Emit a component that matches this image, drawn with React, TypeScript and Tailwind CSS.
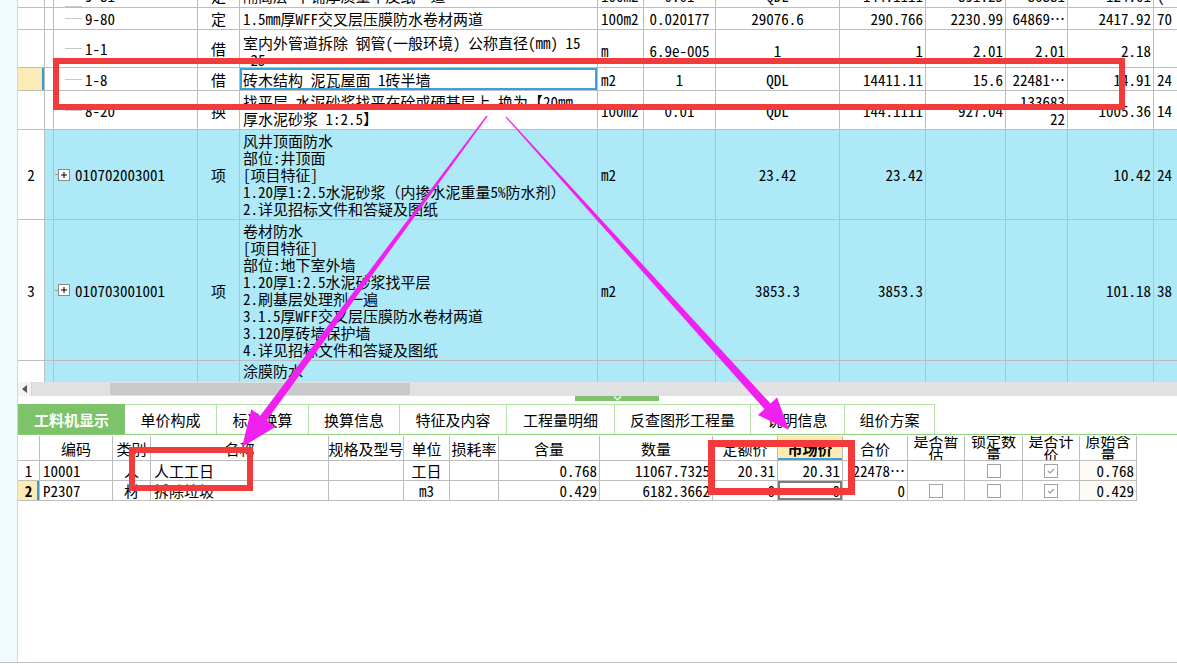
import React from "react";

type Align = "l" | "c" | "r" | "n";
type VAlign = "c" | "t" | "b";

const TOP_COLS =
  "grid grid-cols-[27px_9px_144px_42px_358px_46px_72px_124px_86px_80px_62px_86px_60px]";
const BOT_COLS =
  "grid grid-cols-[22px_73px_38px_178px_75px_46px_49px_101px_113px_65px_65px_65px_57px_58px_57px_57px]";

const H: Record<Align, string> = {
  l: "justify-start pl-[3px]",
  c: "justify-center",
  r: "justify-end pr-[2px]",
  n: "justify-start",
};
const V: Record<VAlign, string> = { c: "items-center", t: "items-start", b: "items-end" };

const BLUE = "bg-[#aee9f8]";

function Cell({
  a = "l",
  v = "c",
  className = "",
  children,
}: {
  a?: Align;
  v?: VAlign;
  className?: string;
  children?: React.ReactNode;
}) {
  return (
    <div
      className={`flex min-w-0 overflow-hidden whitespace-nowrap border-r border-b border-[#bdbdbd] ${H[a]} ${V[v]} ${className}`}
    >
      {children}
    </div>
  );
}

const Lines = ({ l, r = false }: { l: string[]; r?: boolean }) => (
  <div className={`flex flex-col ${r ? "items-end" : "items-start"}`}>
    {l.map((t, i) => (
      <div key={i}>{t}</div>
    ))}
  </div>
);

// tree connector for child rows
const Conn = () => <span className="ml-[11px] mr-[3px] w-[17px] h-px shrink-0 bg-[#c8c8c8]" />;

const Expand = () => (
  <>
    <span className="ml-[1px] w-[3px] h-px shrink-0 bg-[#9a9a9a]" />
    <svg width="12" height="12" viewBox="0 0 12 12" className="shrink-0 mr-[5px]">
      <rect x="0.5" y="0.5" width="11" height="11" fill="#ffffff" stroke="#8a8a8a" />
      <path d="M3 6h6M6 3v6" stroke="#000" strokeWidth="1" />
    </svg>
  </>
);

// text of the row that is scrolled almost out of view
const Cut = ({ t }: { t: string }) => <span className="mb-[3px]">{t}</span>;

function TopGrid() {
  return (
    <div className="h-[382px] shrink-0 overflow-hidden">
      {/* partially scrolled row */}
      <div className={`${TOP_COLS} h-[8px]`}>
        <Cell />
        <Cell />
        <Cell a="n" v="b">
          <Conn />
          <Cut t="9-81" />
        </Cell>
        <Cell a="c" v="b"><Cut t="定" /></Cell>
        <Cell v="b"><Cut t="隔离层 干铺厚质量牛皮纸一道" /></Cell>
        <Cell v="b"><Cut t="100m2" /></Cell>
        <Cell a="c" v="b"><Cut t="0.01" /></Cell>
        <Cell a="c" v="b"><Cut t="QDL" /></Cell>
        <Cell a="r" v="b"><Cut t="144.1111" /></Cell>
        <Cell a="r" v="b"><Cut t="891.25" /></Cell>
        <Cell a="r" v="b"><Cut t="86881" /></Cell>
        <Cell a="r" v="b"><Cut t="124.01" /></Cell>
        <Cell v="b"><Cut t="(" /></Cell>
      </div>

      <div className={`${TOP_COLS} h-[22px]`}>
        <Cell />
        <Cell />
        <Cell a="n"><Conn />9-80</Cell>
        <Cell a="c">定</Cell>
        <Cell>1.5mm厚WFF交叉层压膜防水卷材两道</Cell>
        <Cell>100m2</Cell>
        <Cell a="c">0.020177</Cell>
        <Cell a="c">29076.6</Cell>
        <Cell a="r">290.766</Cell>
        <Cell a="r">2230.99</Cell>
        <Cell a="r">64869…</Cell>
        <Cell a="r">2417.92</Cell>
        <Cell>70</Cell>
      </div>

      <div className={`${TOP_COLS} h-[38px]`}>
        <Cell />
        <Cell />
        <Cell a="n"><Conn />1-1</Cell>
        <Cell a="c">借</Cell>
        <Cell v="t" className="pt-[4px]">
          <Lines l={["室内外管道拆除 钢管(一般环境) 公称直径(mm) 15", "~25"]} />
        </Cell>
        <Cell className="pt-[3px]">m</Cell>
        <Cell a="c" className="pt-[3px]">6.9e-005</Cell>
        <Cell a="c" className="pt-[3px]">1</Cell>
        <Cell a="r" className="pt-[3px]">1</Cell>
        <Cell a="r" className="pt-[3px]">2.01</Cell>
        <Cell a="r" className="pt-[3px]">2.01</Cell>
        <Cell a="r" className="pt-[3px]">2.18</Cell>
        <Cell />
      </div>

      {/* selected row */}
      <div className={`${TOP_COLS} h-[23px]`}>
        <Cell className="bg-[#fdebb5] shadow-[inset_-2px_0_0_#2f9fd5]" />
        <Cell />
        <Cell a="n"><Conn />1-8</Cell>
        <Cell a="c">借</Cell>
        <Cell className="shadow-[inset_0_0_0_2px_#3aa2d6]">砖木结构 泥瓦屋面 1砖半墙</Cell>
        <Cell>m2</Cell>
        <Cell a="c">1</Cell>
        <Cell a="c">QDL</Cell>
        <Cell a="r">14411.11</Cell>
        <Cell a="r">15.6</Cell>
        <Cell a="r">22481…</Cell>
        <Cell a="r">14.91</Cell>
        <Cell>24</Cell>
      </div>

      <div className={`${TOP_COLS} h-[39px]`}>
        <Cell />
        <Cell />
        <Cell a="n"><Conn />8-20</Cell>
        <Cell a="c">换</Cell>
        <Cell>
          <Lines l={["找平层 水泥砂浆找平在砼或硬基层上 换为【20mm", "厚水泥砂浆 1:2.5】"]} />
        </Cell>
        <Cell>100m2</Cell>
        <Cell a="c">0.01</Cell>
        <Cell a="c">QDL</Cell>
        <Cell a="r">144.1111</Cell>
        <Cell a="r">927.04</Cell>
        <Cell a="r">
          <Lines r l={["133683", "22"]} />
        </Cell>
        <Cell a="r">1005.36</Cell>
        <Cell>14</Cell>
      </div>

      <div className={`${TOP_COLS} h-[90px]`}>
        <Cell a="c">2</Cell>
        <Cell className={BLUE} />
        <Cell a="n" className={BLUE}>
          <Expand />
          010702003001
        </Cell>
        <Cell a="c" className={BLUE}>项</Cell>
        <Cell className={BLUE}>
          <Lines
            l={[
              "风井顶面防水",
              "部位:井顶面",
              "[项目特征]",
              "1.20厚1:2.5水泥砂浆（内掺水泥重量5%防水剂）",
              "2.详见招标文件和答疑及图纸",
            ]}
          />
        </Cell>
        <Cell className={BLUE}>m2</Cell>
        <Cell className={BLUE} />
        <Cell a="c" className={BLUE}>23.42</Cell>
        <Cell a="r" className={BLUE}>23.42</Cell>
        <Cell className={BLUE} />
        <Cell className={BLUE} />
        <Cell a="r" className={BLUE}>10.42</Cell>
        <Cell className={BLUE}>24</Cell>
      </div>

      <div className={`${TOP_COLS} h-[141px]`}>
        <Cell a="c">3</Cell>
        <Cell className={BLUE} />
        <Cell a="n" className={BLUE}>
          <Expand />
          010703001001
        </Cell>
        <Cell a="c" className={BLUE}>项</Cell>
        <Cell className={BLUE}>
          <Lines
            l={[
              "卷材防水",
              "[项目特征]",
              "部位:地下室外墙",
              "1.20厚1:2.5水泥砂浆找平层",
              "2.刷基层处理剂一遍",
              "3.1.5厚WFF交叉层压膜防水卷材两道",
              "3.120厚砖墙保护墙",
              "4.详见招标文件和答疑及图纸",
            ]}
          />
        </Cell>
        <Cell className={BLUE}>m2</Cell>
        <Cell className={BLUE} />
        <Cell a="c" className={BLUE}>3853.3</Cell>
        <Cell a="r" className={BLUE}>3853.3</Cell>
        <Cell className={BLUE} />
        <Cell className={BLUE} />
        <Cell a="r" className={BLUE}>101.18</Cell>
        <Cell className={BLUE}>38</Cell>
      </div>

      <div className={`${TOP_COLS} h-[60px]`}>
        <Cell />
        <Cell className={BLUE} />
        <Cell className={BLUE} />
        <Cell className={BLUE} />
        <Cell v="t" className={`${BLUE} pt-px`}>涂膜防水</Cell>
        <Cell className={BLUE} />
        <Cell className={BLUE} />
        <Cell className={BLUE} />
        <Cell className={BLUE} />
        <Cell className={BLUE} />
        <Cell className={BLUE} />
        <Cell className={BLUE} />
        <Cell className={BLUE} />
      </div>
    </div>
  );
}

function ScrollBar() {
  return (
    <div className="h-[14px] shrink-0 flex bg-[#e1e1e1]">
      <div className="w-[14px] bg-[#f3f3f3] border-r border-[#d4d4d4] flex items-center justify-center">
        <svg width="5" height="8" viewBox="0 0 5 8">
          <path d="M5 0L0 4l5 4z" fill="#555" />
        </svg>
      </div>
      <div className="ml-[78px] my-[1px] w-[300px] bg-[#c9c9c9]" />
    </div>
  );
}

function Splitter() {
  return (
    <div className="h-[8px] shrink-0 bg-white">
      <div className="ml-[557px] w-[84px] h-[5px] bg-[#7cc36a] flex justify-center">
        <svg width="9" height="5" viewBox="0 0 9 5">
          <path d="M1 0.5l3.5 3.5L8 0.5" fill="none" stroke="#ffffff" strokeWidth="1.2" />
        </svg>
      </div>
    </div>
  );
}

const TABS = [
  { t: "单价构成", w: "w-[92px]" },
  { t: "标准换算", w: "w-[92px]" },
  { t: "换算信息", w: "w-[91px]" },
  { t: "特征及内容", w: "w-[107px]" },
  { t: "工程量明细", w: "w-[108px]" },
  { t: "反查图形工程量", w: "w-[136px]" },
  { t: "说明信息", w: "w-[94px]" },
  { t: "组价方案", w: "w-[90px]" },
];

function Tabs() {
  return (
    <div className="h-[31px] shrink-0 flex border-b border-[#8dcf7a] text-[15px]">
      <div className="w-[107px] bg-[#7cc36a] text-white font-bold flex items-center justify-center">
        工料机显示
      </div>
      {TABS.map((tab) => (
        <div
          key={tab.t}
          className={`${tab.w} border-t border-r border-[#b7e2a8] flex items-center justify-center`}
        >
          {tab.t}
        </div>
      ))}
    </div>
  );
}

const Box = ({ checked = false }: { checked?: boolean }) => (
  <svg width="14" height="14" viewBox="0 0 14 14">
    <rect x="0.5" y="0.5" width="13" height="13" fill="#fff" stroke="#a3a3a3" />
    {checked && <path d="M4 7l2 2 4-4" fill="none" stroke="#9a9a9a" strokeWidth="1.2" />}
  </svg>
);

function BottomGrid() {
  const head = "leading-[14px] text-center";
  return (
    <div className="mt-px">
      <div className={`${BOT_COLS} h-[25px]`}>
        <Cell />
        <Cell a="c">编码</Cell>
        <Cell a="c">类别</Cell>
        <Cell a="c">名称</Cell>
        <Cell a="c">规格及型号</Cell>
        <Cell a="c">单位</Cell>
        <Cell a="c">损耗率</Cell>
        <Cell a="c">含量</Cell>
        <Cell a="c">数量</Cell>
        <Cell a="c">定额价</Cell>
        <Cell a="c" className="bg-[#fdebb5] font-bold shadow-[inset_0_-2px_0_#3aa0d8]">市场价</Cell>
        <Cell a="c">合价</Cell>
        <Cell a="c"><div className={head}>是否暂<br />估</div></Cell>
        <Cell a="c"><div className={head}>锁定数<br />量</div></Cell>
        <Cell a="c"><div className={head}>是否计<br />价</div></Cell>
        <Cell a="c"><div className={head}>原始含<br />量</div></Cell>
      </div>

      <div className={`${BOT_COLS} h-[20px]`}>
        <Cell a="c">1</Cell>
        <Cell>10001</Cell>
        <Cell a="c">人</Cell>
        <Cell>人工工日</Cell>
        <Cell />
        <Cell a="c">工日</Cell>
        <Cell />
        <Cell a="r">0.768</Cell>
        <Cell a="r">11067.7325</Cell>
        <Cell a="r">20.31</Cell>
        <Cell a="r">20.31</Cell>
        <Cell a="r">22478…</Cell>
        <Cell />
        <Cell a="c"><Box /></Cell>
        <Cell a="c"><Box checked /></Cell>
        <Cell a="r" className="bg-[#fdfaf5]">0.768</Cell>
      </div>

      <div className={`${BOT_COLS} h-[20px]`}>
        <Cell a="c" className="bg-[#fdebb5] font-bold shadow-[inset_-2px_0_0_#2f9fd5]">2</Cell>
        <Cell>P2307</Cell>
        <Cell a="c">材</Cell>
        <Cell>拆除垃圾</Cell>
        <Cell />
        <Cell a="c">m3</Cell>
        <Cell />
        <Cell a="r">0.429</Cell>
        <Cell a="r">6182.3662</Cell>
        <Cell a="r">0</Cell>
        <Cell a="r" className="shadow-[inset_0_0_0_2px_#7d7d7d]">0</Cell>
        <Cell a="r">0</Cell>
        <Cell a="c"><Box /></Cell>
        <Cell a="c"><Box /></Cell>
        <Cell a="c"><Box checked /></Cell>
        <Cell a="r" className="bg-[#fdfaf5]">0.429</Cell>
      </div>
    </div>
  );
}

function Overlay() {
  return (
    <svg
      className="absolute inset-0 pointer-events-none"
      width="1177"
      height="664"
      viewBox="0 0 1177 664"
    >
      <rect x="56" y="61" width="1066" height="46" fill="none" stroke="#f43b3b" strokeWidth="6" />
      <rect x="132" y="450" width="118" height="38" fill="none" stroke="#f43b3b" strokeWidth="6" />
      <rect x="711.5" y="443.5" width="140" height="48" fill="none" stroke="#f43b3b" strokeWidth="7" />
      <polygon
        points="487.5,116.4 266.6,420.5 275.5,427 242,447 251.3,409.2 260.2,415.7 486.5,115.6"
        fill="#f020f0"
      />
      <polygon
        points="506.4,116.6 770.5,403.6 777.1,397.6 789,430 757.9,415 764.5,409 505.6,117.4"
        fill="#f020f0"
      />
    </svg>
  );
}

export default function App() {
  return (
    <div className="relative w-[1177px] h-[664px] overflow-hidden bg-white text-black text-[15px] leading-[17px] font-['Noto_Sans_Mono_CJK_SC','Noto_Sans_CJK_SC',monospace]">
      <div className="flex h-[663px] border-b border-[#c4c4c4]">
        <div className="w-[18px] shrink-0 bg-[#effbfd] border-r border-[#d2d9da]" />
        <div className="flex-1 min-w-0 flex flex-col overflow-hidden">
          <TopGrid />
          <ScrollBar />
          <Splitter />
          <Tabs />
          <BottomGrid />
        </div>
      </div>
      <Overlay />
    </div>
  );
}
